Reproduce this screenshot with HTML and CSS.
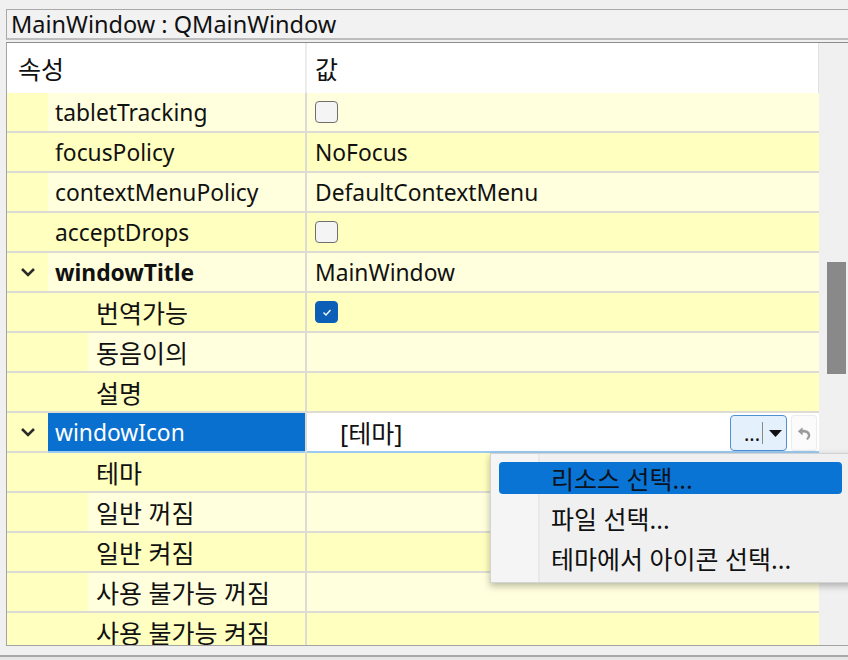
FILE: index.html
```html
<!DOCTYPE html>
<html lang="ko">
<head>
<meta charset="utf-8">
<title>Property Editor</title>
<link rel="stylesheet" href="styles.css">
</head>
<body>
<div class="app">
  <div class="objbar">MainWindow : QMainWindow</div>
  <div class="tree">
    <div class="view">
      <div class="header">
        <div class="hname ko">속성</div>
        <div class="hval ko">값</div>
      </div>

      <div class="row light">
        <div class="name"><span class="gutter g1"></span><span class="label">tabletTracking</span></div>
        <div class="val"><span class="cb"></span></div>
      </div>
      <div class="row dark">
        <div class="name"><span class="gutter g1"></span><span class="label">focusPolicy</span></div>
        <div class="val">NoFocus</div>
      </div>
      <div class="row light">
        <div class="name"><span class="gutter g1"></span><span class="label">contextMenuPolicy</span></div>
        <div class="val">DefaultContextMenu</div>
      </div>
      <div class="row dark">
        <div class="name"><span class="gutter g1"></span><span class="label">acceptDrops</span></div>
        <div class="val"><span class="cb"></span></div>
      </div>
      <div class="row light">
        <div class="name"><span class="gutter g1"><svg class="chev" width="16" height="10" viewBox="0 0 16 10"><polyline points="2,2 8,8 14,2" fill="none" stroke="#2b2b2b" stroke-width="2.6"/></svg></span><span class="label bold">windowTitle</span></div>
        <div class="val">MainWindow</div>
      </div>
      <div class="row dark">
        <div class="name"><span class="gutter g2"></span><span class="label sub ko">번역가능</span></div>
        <div class="val"><span class="cb on"><svg width="24" height="23" viewBox="0 0 24 23"><polyline points="8.5,11.5 11,14 15.5,9" fill="none" stroke="#ffffff" stroke-width="1.3"/></svg></span></div>
      </div>
      <div class="row light">
        <div class="name"><span class="gutter g2"></span><span class="label sub ko">동음이의</span></div>
        <div class="val"></div>
      </div>
      <div class="row dark">
        <div class="name"><span class="gutter g2"></span><span class="label sub ko">설명</span></div>
        <div class="val"></div>
      </div>
      <div class="row light sel">
        <div class="name"><span class="gutter g1"><svg class="chev" width="16" height="10" viewBox="0 0 16 10"><polyline points="2,2 8,8 14,2" fill="none" stroke="#2b2b2b" stroke-width="2.6"/></svg></span><span class="label">windowIcon</span></div>
        <div class="val editor">
          <span class="theme ko">[테마]</span>
          <span class="combo"><span class="dots">...</span><span class="vsep"></span><svg class="arrow" width="13" height="7" viewBox="0 0 13 7"><polygon points="0,0 13,0 6.5,7" fill="#111"/></svg></span>
          <span class="reset"><svg width="15" height="15" viewBox="0 0 14 14"><path d="M0.8 5 L5.2 1.2 L5.2 3.5 C9.2 3.3 12.4 5.4 12.4 8.6 C12.4 10.6 11.2 12.1 9.8 13 L8.5 11.8 C9.5 11 10.1 10 10.1 8.9 C10.1 7 8.2 6 5.2 6.2 L5.2 8.8 Z" fill="#9b9b9b"/></svg></span>
        </div>
      </div>
      <div class="row dark">
        <div class="name"><span class="gutter g2"></span><span class="label sub ko">테마</span></div>
        <div class="val"></div>
      </div>
      <div class="row light">
        <div class="name"><span class="gutter g2"></span><span class="label sub ko">일반 꺼짐</span></div>
        <div class="val"></div>
      </div>
      <div class="row dark">
        <div class="name"><span class="gutter g2"></span><span class="label sub ko">일반 켜짐</span></div>
        <div class="val"></div>
      </div>
      <div class="row light">
        <div class="name"><span class="gutter g2"></span><span class="label sub ko">사용 불가능 꺼짐</span></div>
        <div class="val"></div>
      </div>
      <div class="row dark">
        <div class="name"><span class="gutter g2"></span><span class="label sub ko">사용 불가능 켜짐</span></div>
        <div class="val"></div>
      </div>
    </div>
    <div class="scroll"><div class="thumb"></div></div>
  </div>
  <div class="bottom"></div>

  <div class="menu ko">
    <div class="item"><span class="hl">리소스 선택...</span></div>
    <div class="item"><span class="txt">파일 선택...</span></div>
    <div class="item"><span class="txt">테마에서 아이콘 선택...</span></div>
  </div>
</div>
</body>
</html>
```

FILE: styles.css
```css
html, body {
  margin: 0;
  padding: 0;
}
body {
  background: #f0f0f0;
  font-family: "Noto Sans", "Noto Sans CJK KR", sans-serif;
  font-size: 22.8px;
  color: #111;
  width: 848px;
  height: 660px;
  overflow: hidden;
}
.ko {
  font-size: 25px;
}
.app {
  position: relative;
  padding-top: 9px;
  height: 651px;
}
.objbar {
  margin-left: 6px;
  height: 28px;
  line-height: 28px;
  padding-left: 4px;
  background: #f2f2f2;
  border-top: 1px solid #a9a9a9;
  border-left: 1px solid #a9a9a9;
  border-bottom: 2px solid #bdbdbd;
  font-size: 23.5px;
  white-space: nowrap;
}
.tree {
  margin-top: 2px;
  margin-left: 6px;
  height: 602px;
  display: flex;
  border-top: 1px solid #8c8c8c;
  border-left: 1px solid #a3a3a3;
  border-bottom: 1px solid #a3a3a3;
}
.view {
  width: 812px;
  overflow: hidden;
  background: #ffffff;
}
.header {
  height: 50px;
  display: flex;
  background: #ffffff;
  border-right: 1px solid #e2e2e2;
}
.hname {
  width: 287px;
  padding-left: 11px;
  border-right: 2px solid #ececec;
  display: flex;
  align-items: center;
}
.hval {
  flex: 1;
  padding-left: 8px;
  display: flex;
  align-items: center;
}
.row {
  height: 40px;
  box-sizing: border-box;
  display: flex;
  border-bottom: 2px solid #dcdcd4;
}
.row.light { background: #ffffdd; }
.row.dark { background: #ffffbf; }
.name {
  width: 298px;
  flex: none;
  display: flex;
  border-right: 2px solid #dcdcd4;
  white-space: nowrap;
}
.gutter {
  flex: none;
  background: #ffffbf;
  display: flex;
  align-items: center;
}
.g1 { width: 41px; }
.g2 { width: 81px; }
.chev { margin-left: 13px; }
.label {
  flex: 1;
  padding-left: 7px;
  display: flex;
  align-items: center;
}
.label.sub { padding-left: 8px; }
.label.bold { font-weight: 700; }
.val {
  flex: 1;
  padding-left: 8px;
  display: flex;
  align-items: center;
  white-space: nowrap;
}
.cb {
  width: 21px;
  height: 20px;
  border: 1.5px solid #6f6f6f;
  border-radius: 4px;
  background: #f4f4f4;
  display: flex;
}
.cb.on {
  background: #0b5fb6;
  border-color: #0b5fb6;
}
.cb svg {
  margin: -1.5px;
}

/* selected row */
.row.sel {
  border-bottom: none;
}
.sel .gutter {
  border-bottom: 2px solid #dcdcd4;
}
.sel .label {
  background: #0a70d0;
  color: #ffffff;
  border-bottom: 2px solid #9ccaf0;
}
.sel .val {
  background: #ffffff;
  border-bottom: 2px solid #9ccaf0;
}
.val.editor {
  padding-left: 33px;
  padding-right: 2px;
  gap: 4px;
}
.theme {
  flex: 1;
}
.combo {
  width: 55px;
  height: 34px;
  border: 1px solid #4f8fd4;
  border-radius: 4px;
  background: #e4f0fb;
  display: flex;
  align-items: center;
  margin-top: 2px;
}
.dots {
  width: 29px;
  text-align: right;
  line-height: 34px;
  font-size: 20px;
  padding-top: 2px;
}
.vsep {
  width: 1px;
  height: 22px;
  background: #8a8a8a;
  margin-left: 2px;
}
.arrow {
  margin-left: 6px;
}
.reset {
  width: 24px;
  height: 34px;
  border: 1px solid #ececec;
  border-radius: 3px;
  background: #fbfbfb;
  display: flex;
  align-items: center;
  justify-content: center;
  margin-top: 2px;
}

/* scrollbar */
.scroll {
  flex: 1;
  background: #f0f0f0;
}
.thumb {
  margin-top: 219px;
  margin-left: 8px;
  width: 19px;
  height: 112px;
  background: #898989;
}

.bottom {
  margin-top: 9px;
  border-top: 2px solid #a8a8a8;
  background: #e6e6e6;
  height: 10px;
}

/* popup menu */
.menu {
  position: absolute;
  left: 490px;
  top: 453px;
  width: 362px;
  padding: 4px 0;
  background: linear-gradient(to right, #f5f5f5 47px, #e9e9e9 47px, #e9e9e9 49px, #f0f0f0 49px);
  border: 1px solid #d3d3d3;
  box-shadow: 0 3px 7px rgba(0, 0, 0, 0.28);
}
.item {
  height: 40px;
  padding: 4px 11px 4px 8px;
  box-sizing: border-box;
  display: flex;
}
.hl, .txt {
  flex: 1;
  padding-left: 52px;
  display: flex;
  align-items: center;
  border-radius: 4px;
  white-space: nowrap;
}
.hl {
  background: #0a74d4;
  color: #0b1320;
}
```
